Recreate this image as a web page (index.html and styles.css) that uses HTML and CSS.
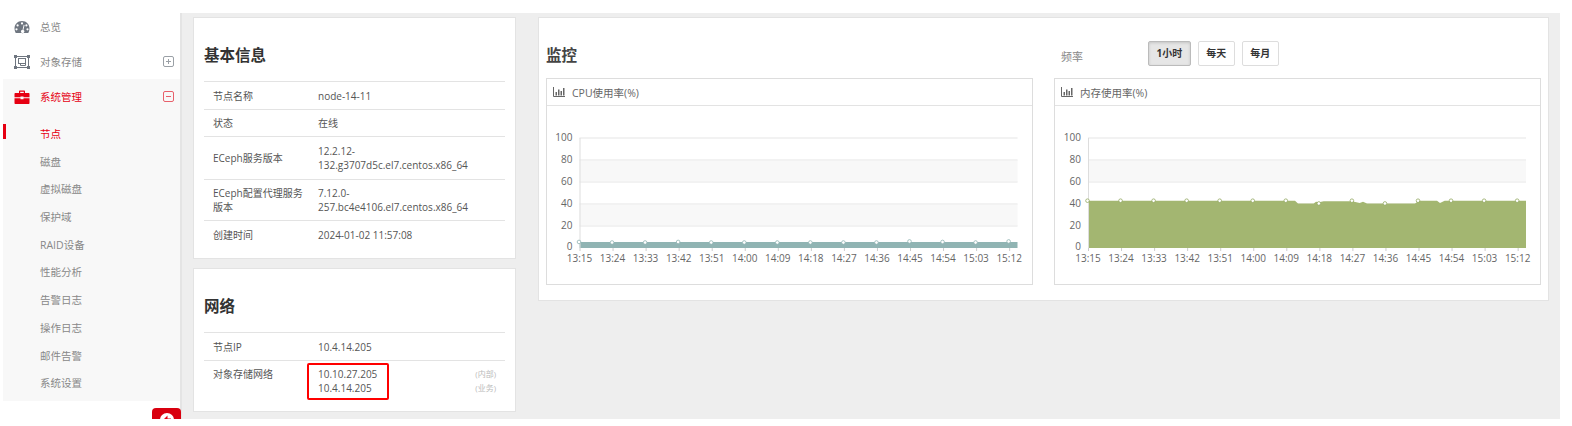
FILE: index.html
```html
<!DOCTYPE html>
<html lang="zh">
<head>
<meta charset="utf-8">
<title>节点</title>
<link rel="stylesheet" href="styles.css">
</head>
<body>
<div class="app">
  <aside class="sidebar">
    <div class="menu-row">
      <svg class="menu-icon" viewBox="0 0 16 14"><path fill="#6f7680" fill-rule="evenodd" d="M8 1C3.600 1 .5 4.300 .5 8.500c0 1.600.4 3 1.200 4.400h12.600c.8-1.400 1.200-2.800 1.200-4.400C15.500 4.300 12.400 1 8 1zM8 2.300a1.100 1.100 0 1 1 0 2.200 1.100 1.100 0 0 1 0-2.200zM3.600 4.300a1.100 1.100 0 1 1 0 2.200 1.100 1.100 0 0 1 0-2.200zM12.400 4.300a1.100 1.100 0 1 1 0 2.200 1.100 1.100 0 0 1 0-2.200zM2.500 8.200a1.100 1.100 0 1 1 0 2.200 1.100 1.100 0 0 1 0-2.200zM13.500 8.200a1.100 1.100 0 1 1 0 2.200 1.100 1.100 0 0 1 0-2.200zM9.700 4.800l.9.300-1.200 5a1.600 1.600 0 1 1-.9-.2z"/></svg>
      <span class="menu-label">总览</span>
    </div>
    <div class="menu-row">
      <svg class="menu-icon" viewBox="0 0 16 14"><g fill="none" stroke="#6f7680"><rect x="1.500" y="1.500" width="13" height="11"/><rect x="4.500" y="3.500" width="7" height="5"/><path d="M6.500 8.500v2h5v-2"/></g><g fill="#6f7680"><rect x="0" y="0" width="3" height="3"/><rect x="13" y="0" width="3" height="3"/><rect x="0" y="11" width="3" height="3"/><rect x="13" y="11" width="3" height="3"/></g></svg>
      <span class="menu-label">对象存储</span>
      <span class="toggle"><svg viewBox="0 0 11 11"><rect x=".5" y=".5" width="10" height="10" rx="1.500" fill="none" stroke="#9aa0a6"/><path d="M3 5.500h5M5.500 3v5" stroke="#9aa0a6"/></svg></span>
    </div>
    <div class="group">
      <div class="menu-row menu-row-active">
        <svg class="menu-icon" viewBox="0 0 16 14"><path fill="#e60012" d="M5 3V1.500C5 .9 5.400.500 6 .500h4c.6 0 1 .4 1 1V3h3.500c.6 0 1 .4 1 1v3.200H9.500v-.7h-3v.7H.5V4c0-.6.4-1 1-1zM6.200 3h3.600V1.700H6.200zM.5 8.200h6v1h3v-1h6V13c0 .6-.4 1-1 1h-13c-.6 0-1-.4-1-1z"/></svg>
        <span class="menu-label">系统管理</span>
        <span class="toggle"><svg viewBox="0 0 11 11"><rect x=".5" y=".5" width="10" height="10" rx="1.500" fill="none" stroke="#e8606b"/><path d="M3 5.500h5" stroke="#e8606b"/></svg></span>
      </div>
      <ul class="submenu">
        <li class="sub-item sub-active">节点</li>
        <li class="sub-item">磁盘</li>
        <li class="sub-item">虚拟磁盘</li>
        <li class="sub-item">保护域</li>
        <li class="sub-item">RAID设备</li>
        <li class="sub-item">性能分析</li>
        <li class="sub-item">告警日志</li>
        <li class="sub-item">操作日志</li>
        <li class="sub-item">邮件告警</li>
        <li class="sub-item">系统设置</li>
      </ul>
    </div>
    <div class="collapse-tab"><svg viewBox="0 0 14 14"><circle cx="7" cy="7" r="7" fill="#fff"/><path d="M7.500 2.500 3 7l4.500 4.500V8.500H11v-3H7.500z" fill="#e60012"/></svg></div>
  </aside>
  <main class="content">
    <div class="col-left">
      <section class="panel panel-info">
        <h2 class="panel-title">基本信息</h2>
        <div class="kv">
          <div class="kv-row kv-h28"><div class="kv-key">节点名称</div><div class="kv-val">node-14-11</div></div>
          <div class="kv-row kv-h27"><div class="kv-key">状态</div><div class="kv-val">在线</div></div>
          <div class="kv-row kv-h43"><div class="kv-key">ECeph服务版本</div><div class="kv-val">12.2.12-<br>132.g3707d5c.el7.centos.x86_64</div></div>
          <div class="kv-row kv-h41"><div class="kv-key">ECeph配置代理服务<br>版本</div><div class="kv-val">7.12.0-<br>257.bc4e4106.el7.centos.x86_64</div></div>
          <div class="kv-row kv-h28"><div class="kv-key">创建时间</div><div class="kv-val">2024-01-02 11:57:08</div></div>
        </div>
      </section>
      <section class="panel panel-net">
        <h2 class="panel-title">网络</h2>
        <div class="kv">
          <div class="kv-row kv-h28"><div class="kv-key">节点IP</div><div class="kv-val">10.4.14.205</div></div>
          <div class="kv-row kv-net"><div class="kv-key">对象存储网络</div><div class="kv-val">10.10.27.205<br>10.4.14.205</div><div class="kv-note">(内部)<br>(业务)</div><div class="highlight"></div></div>
        </div>
      </section>
    </div>
    <section class="panel panel-monitor">
      <div class="monitor-head">
        <h2 class="panel-title monitor-title">监控</h2>
        <div class="freq">
          <span class="freq-label">频率</span>
          <div class="freq-btns">
            <span class="btn btn-on">1小时</span>
            <span class="btn">每天</span>
            <span class="btn">每月</span>
          </div>
        </div>
      </div>
      <div class="charts">
        <div class="chart" id="cpu">
          <div class="chart-head"><svg class="chart-icon" viewBox="0 0 12 10"><path d="M.5 0v9.500H12" fill="none" stroke="#666"/><path d="M2.500 5h1.500v3.500H2.500zM5 2.500h1.500v6H5zM7.500 4h1.500v4.500H7.500zM10 1h1.500v7.500H10z" fill="#666"/></svg>CPU使用率(%)</div>
          <div class="chart-body"></div>
        </div>
        <div class="chart" id="mem">
          <div class="chart-head"><svg class="chart-icon" viewBox="0 0 12 10"><path d="M.5 0v9.500H12" fill="none" stroke="#666"/><path d="M2.500 5h1.500v3.500H2.500zM5 2.500h1.500v6H5zM7.500 4h1.500v4.500H7.500zM10 1h1.500v7.500H10z" fill="#666"/></svg>内存使用率(%)</div>
          <div class="chart-body"></div>
        </div>
      </div>
    </section>
  </main>
</div>
<script src="chart.js"></script>
</body>
</html>
```
FILE: styles.css
```css
* { box-sizing: border-box; }
html, body { margin: 0; padding: 0; background: #fff; overflow: hidden; }
body { width: 1572px; height: 426px; font-family: "Open Sans", "Noto Sans CJK SC", sans-serif; font-size: 11px; color: #555; }
.app { display: flex; height: 419px; overflow: hidden; }

.sidebar { position: relative; z-index: 1; flex: 0 0 180px; width: 180px; padding: 9px 0 0 3px; background: #fff; font-size: 10.5px; }
.menu-row { display: flex; align-items: center; height: 35px; color: #888; }
.menu-row-active { color: #e60012; }
.menu-icon { width: 16px; height: 14px; margin-left: 11px; margin-right: 10px; flex: none; }
.menu-label { flex: 1; }
.toggle { width: 11px; height: 11px; margin-right: 6px; display: flex; }
.toggle svg { width: 11px; height: 11px; }
.group { background: #f8f8f8; height: 322px; }
.submenu { list-style: none; margin: 7px 0 0; padding: 0; }
.sub-item { position: relative; height: 27.7px; line-height: 27.7px; padding-left: 37px; color: #888; }
.sub-active { color: #e60012; }
.sub-active::before { content: ""; position: absolute; left: 0; top: 3px; width: 3px; height: 15px; background: #e60012; }
.collapse-tab { position: absolute; left: 152px; top: 408px; width: 29px; height: 18px; border-radius: 4px 4px 0 0; background: #d9000f; display: flex; justify-content: center; padding-top: 5px; }
.collapse-tab svg { width: 14px; height: 14px; }

.content { flex: 0 0 1380px; margin-top: 13px; display: flex; align-items: flex-start; gap: 22px; padding: 4px 11px 0 11px; background: #eee; border-left: 2px solid #e4e4e4; height: 406px; }
.col-left { flex: 0 0 323px; display: flex; flex-direction: column; gap: 9px; }
.panel { background: #fff; border: 1px solid #e3e3e3; padding: 0 10px; }
.panel-info { height: 242px; }
.panel-net { height: 144px; }
.panel-title { margin: 0; font-size: 15.5px; font-weight: 700; color: #333; line-height: 20px; padding: 27px 0 16px; }
.kv-row { position: relative; display: flex; align-items: center; border-top: 1px solid #e3e3e3; padding: 0 9px; font-size: 10px; line-height: 14px; color: #555; }
.kv-h28 { height: 28px; }
.kv-h27 { height: 27px; }
.kv-h43 { height: 43px; }
.kv-h41 { height: 41px; }
.kv-key { flex: 0 0 105px; }
.kv-val { flex: 1; }
.kv-net { align-items: flex-start; padding-top: 6px; }
.kv-note { font-size: 8px; color: #bbb; text-align: right; }
.highlight { position: absolute; left: 103px; top: 2px; width: 82px; height: 37px; border: 2px solid #f00; border-radius: 2px; }

.panel-monitor { flex: 0 0 1011px; height: 284px; padding: 0 7px; }
.monitor-head { display: flex; height: 60px; }
.monitor-title { padding: 27px 0 0; flex: 0 0 515px; color: #444; }
.freq { display: flex; align-items: flex-start; padding-top: 23px; }
.freq-label { flex: 0 0 87px; padding-top: 7px; color: #888; }
.freq-btns { display: flex; gap: 7px; }
.btn { height: 25px; line-height: 23px; padding: 0 7.5px; border: 1px solid #ddd; border-radius: 2px; background: #fff; font-size: 10px; font-weight: 700; color: #333; }
.btn-on { background: #e6e6e6; border-color: #bbb; box-shadow: inset 0 1px 3px rgba(0,0,0,.15); }
.charts { display: flex; gap: 21px; }
.chart { flex: 0 0 487px; height: 207px; border: 1px solid #ddd; }
.chart-head { display: flex; align-items: center; height: 27px; border-bottom: 1px solid #e3e3e3; padding-left: 6px; font-size: 10.5px; color: #666; }
.chart-icon { width: 12px; height: 10px; margin-right: 7px; }
.chart-body { height: 178px; }
.chart-body svg { display: block; }
.tick { font-size: 10px; fill: #666; font-family: "Open Sans", sans-serif; }
```
FILE: chart.js
```js
var LABELS = ["13:15","13:24","13:33","13:42","13:51","14:00","14:09","14:18","14:27","14:36","14:45","14:54","15:03","15:12"];
var NS = "http://www.w3.org/2000/svg";
function el(name, attrs, parent, text) {
  var n = document.createElementNS(NS, name);
  for (var k in attrs) n.setAttribute(k, attrs[k]);
  if (text) n.textContent = text;
  parent.appendChild(n);
  return n;
}
function draw(id, opt) {
  var body = document.querySelector("#" + id + " .chart-body");
  var svg = el("svg", { width: 485, height: 178, viewBox: "0 0 485 178" }, body);
  var x0 = opt.x0, x1 = x0 + 438, step = 33.05, base = 142;
  var yOf = function (v) { return base - v * 1.1; };
  [[80, 60], [40, 20]].forEach(function (b) {
    el("rect", { x: x0, y: yOf(b[0]), width: 438, height: 22, fill: "#f8f8f8" }, svg);
  });
  [100, 80, 60, 40, 20].forEach(function (v) {
    el("rect", { x: x0, y: yOf(v) - 1, width: 438, height: 2, fill: "#f2f2f2" }, svg);
    el("text", { x: x0 - 7, y: yOf(v) + 3, "text-anchor": "end", "class": "tick" }, svg, String(v));
  });
  el("text", { x: x0 - 7, y: base + 2, "text-anchor": "end", "class": "tick" }, svg, "0");
  var d = "M" + x0 + " " + base;
  opt.line.forEach(function (p) { d += "L" + (x0 + p[0]) + " " + yOf(p[1]); });
  d += "L" + x1 + " " + base + "Z";
  el("path", { d: d, fill: opt.fill }, svg);
  el("rect", { x: x0, y: yOf(100), width: 1, height: base - yOf(100), fill: "#ddd" }, svg);
  LABELS.forEach(function (t, i) {
    var x = x0 + i * step;
    el("rect", { x: x, y: base, width: 1, height: 3, fill: "#ccc" }, svg);
    el("text", { x: x, y: base + 14, "text-anchor": "middle", "class": "tick" }, svg, t);
    el("circle", { cx: x - 0.5, cy: yOf(opt.points[i]), r: 1.8, fill: "#fff", stroke: opt.dot, "stroke-width": 0.8 }, svg);
  });
}
draw("cpu", {
  x0: 32.5, fill: "#90b4b3", dot: "#90b4b3",
  line: [[0, 5.5], [438, 5.5]],
  points: [5.5, 5, 5, 5.5, 5, 5, 5, 5, 5, 5, 6, 5.5, 5, 6]
});
draw("mem", {
  x0: 33, fill: "#a3b671", dot: "#93a862",
  line: [[0, 43], [207, 43], [210, 40.5], [225.7, 40.5], [228, 42], [231, 41.5], [235.7, 42.5], [264, 42.5], [271.7, 41], [275, 42], [279, 40.5], [327, 40.5], [331, 43], [349, 43], [352, 41], [356.7, 43], [438, 43]],
  points: [43, 43, 43, 43, 43, 43, 43, 40.5, 43, 40.5, 43, 43, 43, 43]
});
```
